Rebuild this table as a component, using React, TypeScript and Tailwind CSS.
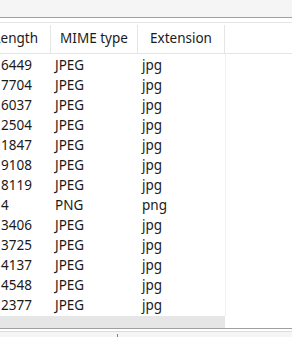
import React from "react";

const rows: [string, string, string][] = [
  ["6449", "JPEG", "jpg"],
  ["7704", "JPEG", "jpg"],
  ["6037", "JPEG", "jpg"],
  ["2504", "JPEG", "jpg"],
  ["1847", "JPEG", "jpg"],
  ["9108", "JPEG", "jpg"],
  ["8119", "JPEG", "jpg"],
  ["4", "PNG", "png"],
  ["3406", "JPEG", "jpg"],
  ["3725", "JPEG", "jpg"],
  ["4137", "JPEG", "jpg"],
  ["4548", "JPEG", "jpg"],
  ["2377", "JPEG", "jpg"],
];

export default function App() {
  return (
    <div
      className="w-[292px] h-[337px] overflow-hidden bg-[#f5f5f5] flex flex-col text-[13.5px] leading-none text-[#1a1a1a]"
      style={{ fontFamily: '"Noto Sans", "Open Sans", sans-serif' }}
    >
      <div className="h-[17px] shrink-0" />
      <div className="h-px bg-[#a0a0a0] shrink-0" />
      <div className="h-[4px] bg-white shrink-0" />
      <div className="flex-1 flex flex-col bg-white border-t border-[#e5e5e5] overflow-hidden">
        {/* column headers */}
        <div className="flex h-[31px] shrink-0 border-b border-[#e5e5e5] pt-[2px]">
          <div className="w-[51px] shrink-0 border-r border-[#e5e5e5] flex items-center justify-end pr-[12px] overflow-hidden whitespace-nowrap">
            Length
          </div>
          <div className="w-[87px] shrink-0 border-r border-[#e5e5e5] flex items-center justify-center whitespace-nowrap">
            MIME type
          </div>
          <div className="w-[87px] shrink-0 border-r border-[#e5e5e5] flex items-center justify-center">
            Extension
          </div>
          <div className="flex-1" />
        </div>
        {/* rows */}
        <div className="flex flex-col w-[226px] border-r border-[#f0f0f0] pt-[2px]">
          {rows.map(([len, mime, ext], i) => (
            <div key={i} className="flex h-[20px] items-center">
              <div className="w-[51px] shrink-0 pl-[1px] whitespace-nowrap">{len}</div>
              <div className="w-[87px] shrink-0 pl-[4px]">{mime}</div>
              <div className="w-[87px] shrink-0 pl-[4px]">{ext}</div>
            </div>
          ))}
        </div>
        <div className="flex-1" />
        <div className="h-[13px] w-[225px] bg-[#e6e6e6] shrink-0" />
      </div>
      <div className="h-px bg-[#a0a0a0] shrink-0" />
      <div className="h-[2px] bg-white shrink-0" />
      <div className="h-px bg-[#dcdcdc] shrink-0" />
      <div className="h-[5px] shrink-0 relative">
        <div className="absolute left-[117px] top-[2px] w-px h-[3px] bg-[#808080]" />
      </div>
    </div>
  );
}
